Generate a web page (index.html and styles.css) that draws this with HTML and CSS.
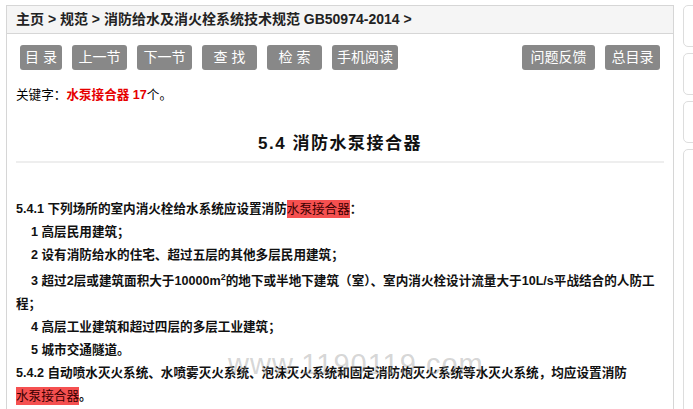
FILE: index.html
```html
<!DOCTYPE html>
<html>
<head>
    <meta charset="utf-8" />
    <title>消防水泵接合器</title>
    <link rel="stylesheet" href="styles.css">
</head>
<body>
    <div class="page">
        <div class="main">
            <div class="crumbs">主页 &gt; 规范 &gt; 消防给水及消火栓系统技术规范 GB50974-2014 &gt;</div>

            <div class="toolbar">
                <div class="tools">
                    <a class="btn btn-xs">目 录</a>
                    <a class="btn btn-md">上一节</a>
                    <a class="btn btn-md">下一节</a>
                    <a class="btn btn-md">查 找</a>
                    <a class="btn btn-md">检 索</a>
                    <a class="btn btn-lg">手机阅读</a>
                </div>
                <div class="tools">
                    <a class="btn btn-xl">问题反馈</a>
                    <a class="btn btn-md">总目录</a>
                </div>
            </div>

            <p class="keyword">关键字：<b>水泵接合器 17</b>个。</p>

            <h2 class="sec-title">5.4 消防水泵接合器</h2>

            <div class="content">
                <p>5.4.1 下列场所的室内消火栓给水系统应设置消防<span class="hl">水泵接合器</span>：</p>
                <p class="item">1 高层民用建筑；</p>
                <p class="item">2 设有消防给水的住宅、超过五层的其他多层民用建筑；</p>
                <p class="item item-sup">3 超过2层或建筑面积大于10000m<sup>2</sup>的地下或半地下建筑（室）、室内消火栓设计流量大于10L/s平战结合的人防工程；</p>
                <p class="item">4 高层工业建筑和超过四层的多层工业建筑；</p>
                <p class="item">5 城市交通隧道。</p>
                <p>5.4.2 自动喷水灭火系统、水喷雾灭火系统、泡沫灭火系统和固定消防炮灭火系统等水灭火系统，均应设置消防<span class="hl">水泵接合器</span>。</p>
                <p>5.4.3 消防<span class="hl">水泵接合器</span>的给水流量宜按每个10L/s~15L/s计算。每种水灭火系统的消防<span class="hl">水泵接合器</span>设置的数量应按系统设计流量经计算确定。</p>
                <div class="watermark">www.1190119.com</div>
            </div>
        </div>

        <div class="side">
            <div class="side-card"></div>
            <div class="side-card"></div>
            <div class="side-card"></div>
            <div class="side-card side-card-long"></div>
        </div>
    </div>
</body>
</html>
```

FILE: styles.css
```css
body {
    margin: 0;
    font-family: "Liberation Sans", "Noto Sans CJK SC", sans-serif;
    color: #000;
    background: #fff;
    overflow: hidden;
}

.page {
    display: flex;
    gap: 9px;
    padding: 5px 0 0 6px;
    width: 900px;
}

.main {
    width: 666px;
    flex-shrink: 0;
    border: 1px solid #d6d6d6;
    border-bottom: none;
    min-height: 420px;
}

.crumbs {
    height: 27px;
    line-height: 27px;
    background-color: #f5f5f5;
    border-bottom: 1px solid #d6d6d6;
    padding-left: 9px;
    font-size: 14px;
    font-weight: bold;
    color: #222;
}

.toolbar {
    display: flex;
    justify-content: space-between;
    margin-top: 11px;
    padding: 0 13px;
}

.tools {
    display: flex;
    gap: 10px;
}

.btn {
    display: block;
    height: 25px;
    line-height: 25px;
    text-align: center;
    background-color: #888;
    color: #fff;
    border-radius: 3px;
    font-size: 14px;
    cursor: pointer;
}

.btn-xs { width: 42px; }
.btn-md { width: 55px; }
.btn-lg { width: 66px; }
.btn-xl { width: 73px; }

.keyword {
    margin: 15px 0 0;
    padding-left: 9px;
    font-size: 12.6px;
    line-height: 20px;
}

.keyword b {
    color: #e60000;
}

.sec-title {
    margin: 27px 9px 0;
    padding-bottom: 5px;
    border-bottom: 2px solid #eee;
    text-align: center;
    font-size: 17px;
    line-height: 24px;
    letter-spacing: 1.5px;
    color: #111;
}

.content {
    position: relative;
    margin-top: 35px;
    padding: 0 9px;
    font-size: 12.6px;
    font-weight: bold;
    color: #111;
}

.content p {
    margin: 0;
    line-height: 23px;
}

.content p.item {
    text-indent: 15px;
}

.content p.item-sup {
    padding-top: 3px;
}

.content sup {
    font-size: 9px;
    line-height: 0;
}

.hl {
    background-color: #f55050;
    color: #3a0000;
    font-weight: normal;
    padding: 2px 0;
    white-space: nowrap;
}

.watermark {
    position: absolute;
    left: 221px;
    top: 152px;
    font-size: 29px;
    line-height: 29px;
    font-weight: normal;
    color: rgba(150, 150, 150, 0.4);
    letter-spacing: 1px;
    pointer-events: none;
}

.side {
    display: flex;
    flex-direction: column;
    gap: 6px;
    flex-shrink: 0;
}

.side-card {
    width: 120px;
    height: 40px;
    border: 1px solid #ddd;
    border-radius: 5px;
}

.side-card-long {
    height: 300px;
}
```
